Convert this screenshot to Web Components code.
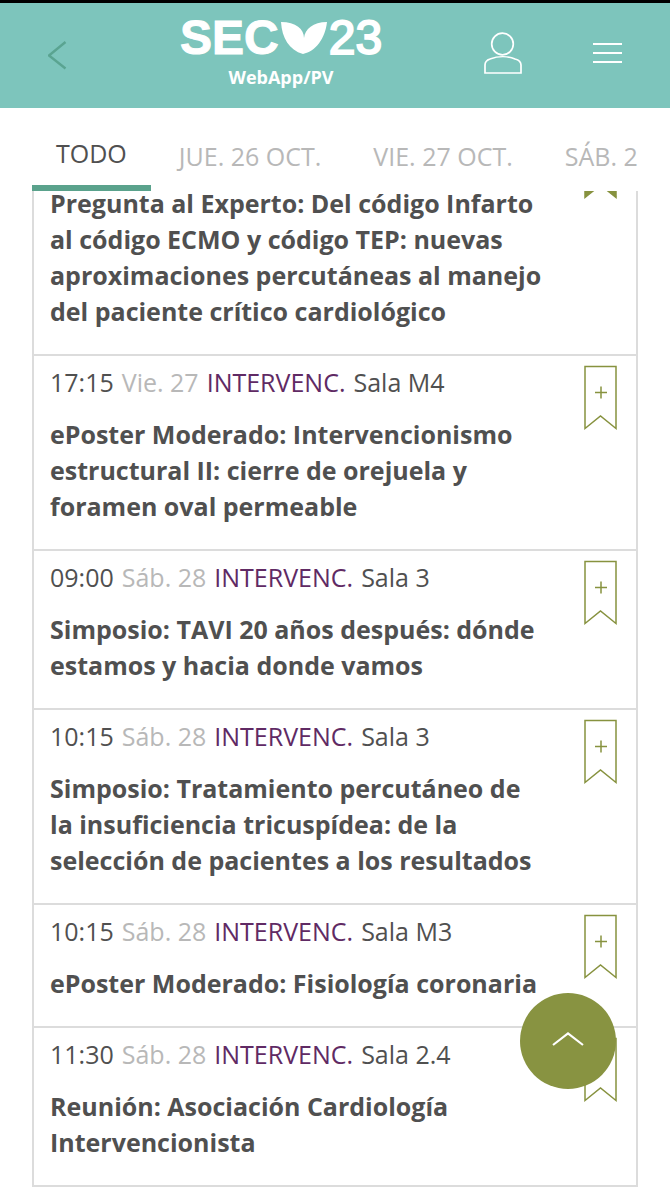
<!DOCTYPE html>
<html lang="es">
<head>
<meta charset="utf-8">
<meta name="viewport" content="width=device-width, initial-scale=1">
<title>SEC 23 - WebApp/PV</title>
<style>
    body {
        margin: 0;
        background: #fff;
        color: #505050;
        font-family: "Open Sans", "Noto Sans", sans-serif;
    }
</style>
</head>
<body>
<session-app>
    <app-header slot="header"></app-header>
    <day-tabs slot="tabs">
        <day-tab active>TODO</day-tab>
        <day-tab>JUE. 26 OCT.</day-tab>
        <day-tab>VIE. 27 OCT.</day-tab>
        <day-tab>SÁB. 28 OCT.</day-tab>
    </day-tabs>
    <session-item saved>Pregunta al Experto: Del código Infarto al código ECMO y código TEP: nuevas aproximaciones percutáneas al manejo del paciente crítico cardiológico</session-item>
    <session-item time="17:15" day="Vie. 27" track="INTERVENC." room="Sala M4">ePoster Moderado: Intervencionismo estructural II: cierre de orejuela y foramen oval permeable</session-item>
    <session-item time="09:00" day="Sáb. 28" track="INTERVENC." room="Sala 3">Simposio: TAVI 20 años después: dónde estamos y hacia donde vamos</session-item>
    <session-item time="10:15" day="Sáb. 28" track="INTERVENC." room="Sala 3">Simposio: Tratamiento percutáneo de la insuficiencia tricuspídea: de la selección de pacientes a los resultados</session-item>
    <session-item time="10:15" day="Sáb. 28" track="INTERVENC." room="Sala M3">ePoster Moderado: Fisiología coronaria</session-item>
    <session-item time="11:30" day="Sáb. 28" track="INTERVENC." room="Sala 2.4">Reunión: Asociación Cardiología Intervencionista</session-item>
</session-app>

<script>
class AppHeader extends HTMLElement {
    constructor() {
        super();
        this.attachShadow({ mode: 'open' });
        this.shadowRoot.innerHTML = `
            <style>
                :host { display: block; }
                header {
                    display: grid;
                    grid-template-columns: 132px auto 1fr;
                    align-items: center;
                    height: 105px;
                    padding: 0 48px;
                    border-top: 3px solid #000;
                    background: #7dc5bc;
                    color: #fff;
                }
                button {
                    display: block;
                    padding: 0;
                    border: 0;
                    background: none;
                    color: inherit;
                    cursor: pointer;
                }
                svg { display: block; }
                .back { justify-self: start; color: #5aa491; }
                .brand { text-align: center; }
                .logo {
                    display: flex;
                    align-items: center;
                    gap: 2px;
                    font: bold 48px/40px "Liberation Sans", Arial, sans-serif;
                    -webkit-text-stroke: 1px #fff;
                }
                .year { font-weight: normal; -webkit-text-stroke: 2px #fff; }
                .sub { font-size: 18px; line-height: 24px; font-weight: 700; margin: 7px 0 5px; }
                .actions {
                    display: flex;
                    justify-content: flex-end;
                    align-items: center;
                    gap: 71px;
                    padding-bottom: 5px;
                }
            </style>
            <header>
                <button class="back" aria-label="Volver">
                    <svg width="19" height="30" viewBox="0 0 19 30" fill="none" stroke="currentColor" stroke-width="2.400"><path d="M17.500 1 1 14.500 17.500 27.500"/></svg>
                </button>
                <div class="brand">
                    <div class="logo">
                        <span>SEC</span>
                        <svg width="46" height="32" viewBox="0 0 46 32" fill="#fff"><path d="M0 0C15 0 23 7 23 16C24 7 32 0 46 0C44 17 35 29 22 32C8 28 1 16 0 0Z"/></svg>
                        <span class="year">23</span>
                    </div>
                    <div class="sub">WebApp/PV</div>
                </div>
                <div class="actions">
                    <button aria-label="Perfil">
                        <svg width="38" height="42" viewBox="0 0 38 42" fill="none" stroke="currentColor" stroke-width="1.700"><circle cx="18.500" cy="12" r="10.800"/><path d="M1 41V33C1 29 3 28 6 27C14 24 24 24 31 27C35 28 37 30 37 33V41Z"/></svg>
                    </button>
                    <button aria-label="Menú">
                        <svg width="29" height="20" viewBox="0 0 29 20" stroke="currentColor" stroke-width="1.800"><path d="M0 1H29M0 10H29M0 19H29"/></svg>
                    </button>
                </div>
            </header>
        `;
    }
}

class DayTabs extends HTMLElement {
    constructor() {
        super();
        this.attachShadow({ mode: 'open' });
        this.shadowRoot.innerHTML = `
            <style>
                :host { display: block; padding: 0 32px; background: #fff; }
                nav {
                    display: flex;
                    align-items: stretch;
                    gap: 4px;
                    height: 83px;
                    overflow: hidden;
                }
            </style>
            <nav><slot></slot></nav>
        `;
    }
}

class DayTab extends HTMLElement {
    constructor() {
        super();
        this.attachShadow({ mode: 'open' });
        this.shadowRoot.innerHTML = `
            <style>
                :host { display: flex; flex: none; }
                button {
                    padding: 12px 24px 0;
                    border: 0;
                    background: none;
                    color: #b8b8b8;
                    font: 400 25px/36px "Open Sans", "Noto Sans", sans-serif;
                    white-space: nowrap;
                    cursor: pointer;
                }
                :host([active]) button {
                    border-bottom: 6px solid #5aa28c;
                    color: #505050;
                }
            </style>
            <button><slot></slot></button>
        `;
    }
}

class SessionItem extends HTMLElement {
    constructor() {
        super();
        this.attachShadow({ mode: 'open' });
        const saved = this.hasAttribute('saved');
        const attr = (name) => this.getAttribute(name) || '';

        this.shadowRoot.innerHTML = `
            <style>
                :host { display: block; }
                article {
                    display: flex;
                    justify-content: space-between;
                    align-items: flex-start;
                    padding: 8px 19px 25px 16px;
                    border: 2px solid #dcdcdc;
                    border-top: 0;
                }
                .text { max-width: 495px; }
                .meta {
                    display: flex;
                    gap: 8px;
                    min-height: 36px;
                    margin-bottom: 16px;
                    font-size: 25px;
                    line-height: 36px;
                }
                .day { color: #b8b8b8; }
                .track { color: #602a64; }
                h2 {
                    margin: 0;
                    font-size: 25px;
                    line-height: 36px;
                    font-weight: 700;
                    color: #505050;
                }
                button {
                    padding: 1px 0 0;
                    border: 0;
                    background: none;
                    color: #87923f;
                    cursor: pointer;
                }
                svg { display: block; }
            </style>
            <article>
                <div class="text">
                    <div class="meta">
                        <span>${attr('time')}</span>
                        <span class="day">${attr('day')}</span>
                        <span class="track">${attr('track')}</span>
                        <span>${attr('room')}</span>
                    </div>
                    <h2><slot></slot></h2>
                </div>
                <button aria-label="Guardar sesión" aria-pressed="${saved}">
                    <svg width="33" height="66" viewBox="0 0 33 66" fill="${saved ? 'currentColor' : 'none'}" stroke="currentColor" stroke-width="1.500">
                        <path d="M1 1.500H32V63.500L16.500 51 1 63.500Z"/>
                        <path d="M11 27.500H23M17 21.500V33.500"/>
                    </svg>
                </button>
            </article>
        `;
    }
}

class SessionApp extends HTMLElement {
    constructor() {
        super();
        this.attachShadow({ mode: 'open' });
        this.shadowRoot.innerHTML = `
            <style>
                :host {
                    display: flex;
                    flex-direction: column;
                    height: 100vh;
                }
                main {
                    flex: 1;
                    min-height: 0;
                    padding: 0 32px;
                    overflow-y: auto;
                    scrollbar-width: none;
                }
                .list { padding-bottom: 32px; }
                .top {
                    position: fixed;
                    right: 54px;
                    bottom: 111px;
                    display: grid;
                    place-items: center;
                    width: 96px;
                    height: 96px;
                    padding: 0;
                    border: 0;
                    border-radius: 50%;
                    background: #889341;
                    color: #fff;
                    cursor: pointer;
                }
            </style>
            <slot name="header"></slot>
            <slot name="tabs"></slot>
            <main><div class="list"><slot></slot></div></main>
            <button class="top" aria-label="Subir">
                <svg width="32" height="20" viewBox="0 0 32 20" fill="none" stroke="currentColor" stroke-width="2.200"><path d="M1 14 16 2.500 31 14"/></svg>
            </button>
        `;
    }

    connectedCallback() {
        const main = this.shadowRoot.querySelector('main');
        this.shadowRoot.querySelector('.top').addEventListener('click', () => {
            main.scrollTo({ top: 0, behavior: 'smooth' });
        });
    }

    scrollList(offset) {
        this.shadowRoot.querySelector('main').scrollTop = offset;
    }
}

customElements.define('app-header', AppHeader);
customElements.define('day-tabs', DayTabs);
customElements.define('day-tab', DayTab);
customElements.define('session-item', SessionItem);
customElements.define('session-app', SessionApp);

document.querySelector('session-app').scrollList(66);
</script>
</body>
</html>
